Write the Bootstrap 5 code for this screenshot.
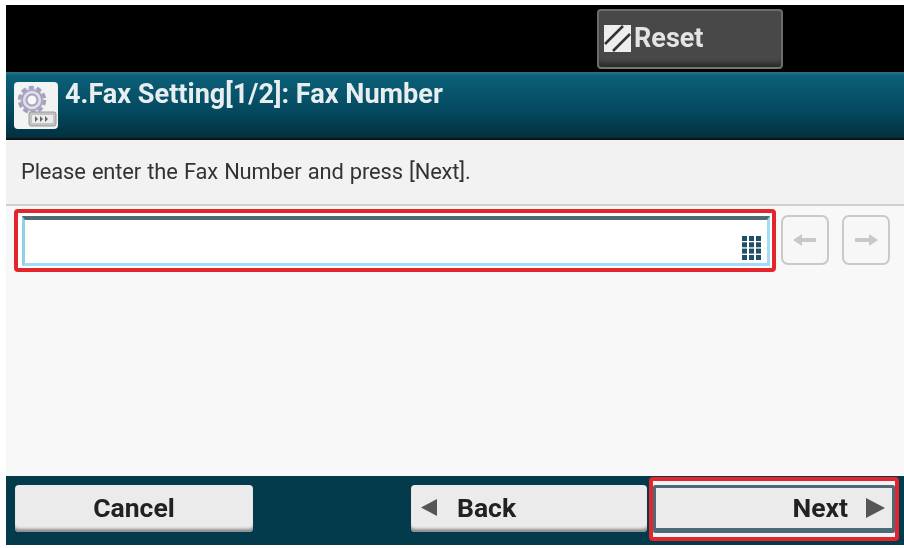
<!DOCTYPE html>
<html lang="en">
<head>
<meta charset="utf-8">
<title>Fax Number</title>
<link href="https://cdn.jsdelivr.net/npm/bootstrap@5.3.0/dist/css/bootstrap.min.css" rel="stylesheet">
<style>
html,body{margin:0;height:100%;background:#fff;overflow:hidden}
body{font-family:Roboto,"Liberation Sans",sans-serif}
.panel{width:898px;height:540px;margin:5px 0 0 6px;filter:blur(.6px)}
.topbar{height:67px;background:#000;padding:4px 121px 0 0}
.resetbtn{width:186px;height:60px;background:#484848;border:2px solid #6c6c6c;border-bottom-color:#77746f;border-radius:4px;color:#e4e4e4;font-size:27px;font-weight:700;padding:0 0 2px 5px;box-shadow:inset 0 -7px 4px -3px #2b2b2b;gap:3px}
.titlebar{height:68px;background:linear-gradient(#2b7389 0,#0b5f78 4px,#04495f 60%,#01303f 100%);border-bottom:2px solid #111;padding:10px 8px 0 8px;color:#e8eef0;font-size:27.1px;font-weight:700;line-height:24px}
.gearicon{width:44px;height:47px;flex:none;background:#f2f3f3;border-radius:4px;margin-right:7px}
.gearicon svg{display:block;width:44px;height:47px}
.prompt{height:66px;background:#f2f2f2;border-bottom:2px solid #cfcfcf;padding:0 0 0 15px;color:#333;font-size:21.9px;letter-spacing:-.14px;word-spacing:.9px}
.workarea{height:270px;background:#f8f8f8;padding:3px 8px 0 8px;align-items:flex-start}
.redframe{width:762px;height:63px;border:4px solid #e3262c;border-radius:4px;padding:3px 2px 2px 4px;background:#fff}
.fieldbox{height:100%;border:3px solid #a2dcf2;border-top:4px solid #4d6b72;border-left-color:#8fd0e6;background:#fff;padding:0 5px 3px 0}
.arrowbtn{width:48px;height:50px;border:2px solid #c9c9c9;border-radius:7px;background:#f7f7f7;margin-top:6px}
.arrowbtn svg{width:24px;height:14px}
.leftarrow{margin-left:5px}
.rightarrow{margin-left:13px}
.bottombar{height:69px;background:#033a4c;padding:9px 0 0 9px;position:relative}
.softbtn{height:47px;background:#ebebeb;border-radius:4px;color:#222;font-size:26.5px;font-weight:700;box-shadow:inset 0 -5px 3px -2px #8a8a8a;border:0;padding-bottom:3px}
.cancelbtn{width:238px}
.backbtn{width:236px;margin-left:158px;padding-left:10px;gap:20px}
.nextframe{width:250px;height:64px;margin:-8px 0 0 2px;border:4px solid #e3262c;border-radius:4px;padding:4px 0;background:#f4f4f4}
.nextbtn{width:100%;height:100%;background:#ebebeb;border:3px solid #4d6b76;border-bottom-width:5px;border-radius:2px;color:#222;font-size:26.5px;font-weight:700;padding:0 7px 0 0;gap:18px}
</style>
</head>
<body>
<div class="panel d-flex flex-column">
  <div class="topbar d-flex justify-content-end">
    <button class="resetbtn d-flex align-items-center" type="button">
      <svg width="27" height="27" viewBox="0 0 27 27" aria-hidden="true"><rect width="27" height="27" fill="#eee"/><path d="M1 19 19 1M9 26 26 9" stroke="#333" stroke-width="2.500" fill="none"/></svg>
      <span>Reset</span>
    </button>
  </div>
  <div class="titlebar d-flex align-items-start">
    <div class="gearicon">
      <svg viewBox="0 0 44 47" aria-hidden="true">
        <g fill="none" stroke="#a5a0bd">
          <circle cx="18" cy="18" r="12.500" stroke-width="3.4" stroke-dasharray="5 2.900" fill="#e0deea"/>
          <circle cx="18" cy="18" r="10" stroke-width="1.600" fill="#e0deea"/>
          <circle cx="18" cy="18" r="5.500" stroke-width="2" fill="#f7f7f7"/>
        </g>
        <rect x="15" y="30" width="27" height="14" rx="2" fill="#c4c4c4" stroke="#999"/>
        <rect x="18" y="33" width="21" height="8" fill="#ececec"/>
        <path d="M21 34v6l3-3zM26 34v6l3-3zM31 34v6l3-3z" fill="#666"/>
      </svg>
    </div>
    <span>4.Fax Setting[1/2]: Fax Number</span>
  </div>
  <div class="prompt d-flex align-items-center">Please enter the Fax Number and press [Next].</div>
  <div class="workarea d-flex">
    <div class="redframe">
      <div class="fieldbox d-flex justify-content-end align-items-end">
        <svg width="20" height="24" viewBox="0 0 20 24" aria-hidden="true" fill="#1f5068">
          <rect x="0" y="0" width="5" height="5"/><rect x="7" y="0" width="5" height="5"/><rect x="14" y="0" width="5" height="5"/>
          <rect x="0" y="6.300" width="5" height="5"/><rect x="7" y="6.300" width="5" height="5"/><rect x="14" y="6.300" width="5" height="5"/>
          <rect x="0" y="12.600" width="5" height="5"/><rect x="7" y="12.600" width="5" height="5"/><rect x="14" y="12.600" width="5" height="5"/>
          <rect x="0" y="19" width="5" height="5"/><rect x="7" y="19" width="5" height="5"/><rect x="14" y="19" width="5" height="5"/>
        </svg>
      </div>
    </div>
    <button class="arrowbtn leftarrow d-flex align-items-center justify-content-center p-0" type="button" aria-label="Left">
      <svg viewBox="0 0 24 14" aria-hidden="true"><path d="M0 7 9 1v4h14v4H9v4z" fill="#c8c8c8"/></svg>
    </button>
    <button class="arrowbtn rightarrow d-flex align-items-center justify-content-center p-0" type="button" aria-label="Right">
      <svg viewBox="0 0 24 14" aria-hidden="true"><path d="M24 7 15 1v4H1v4h14v4z" fill="#c8c8c8"/></svg>
    </button>
  </div>
  <div class="bottombar d-flex align-items-start">
    <button class="softbtn cancelbtn" type="button">Cancel</button>
    <button class="softbtn backbtn d-flex align-items-center" type="button">
      <svg width="16" height="17" viewBox="0 0 16 17" aria-hidden="true"><path d="M16 0v17L0 8.500z" fill="#555"/></svg>
      <span>Back</span>
    </button>
    <div class="nextframe">
      <button class="nextbtn d-flex align-items-center justify-content-end" type="button">
        <span>Next</span>
        <svg width="19" height="20" viewBox="0 0 19 20" aria-hidden="true"><path d="M0 0v20l19-10z" fill="#555"/></svg>
      </button>
    </div>
  </div>
</div>
<script src="https://cdn.jsdelivr.net/npm/bootstrap@5.3.0/dist/js/bootstrap.bundle.min.js"></script>
</body>
</html>
